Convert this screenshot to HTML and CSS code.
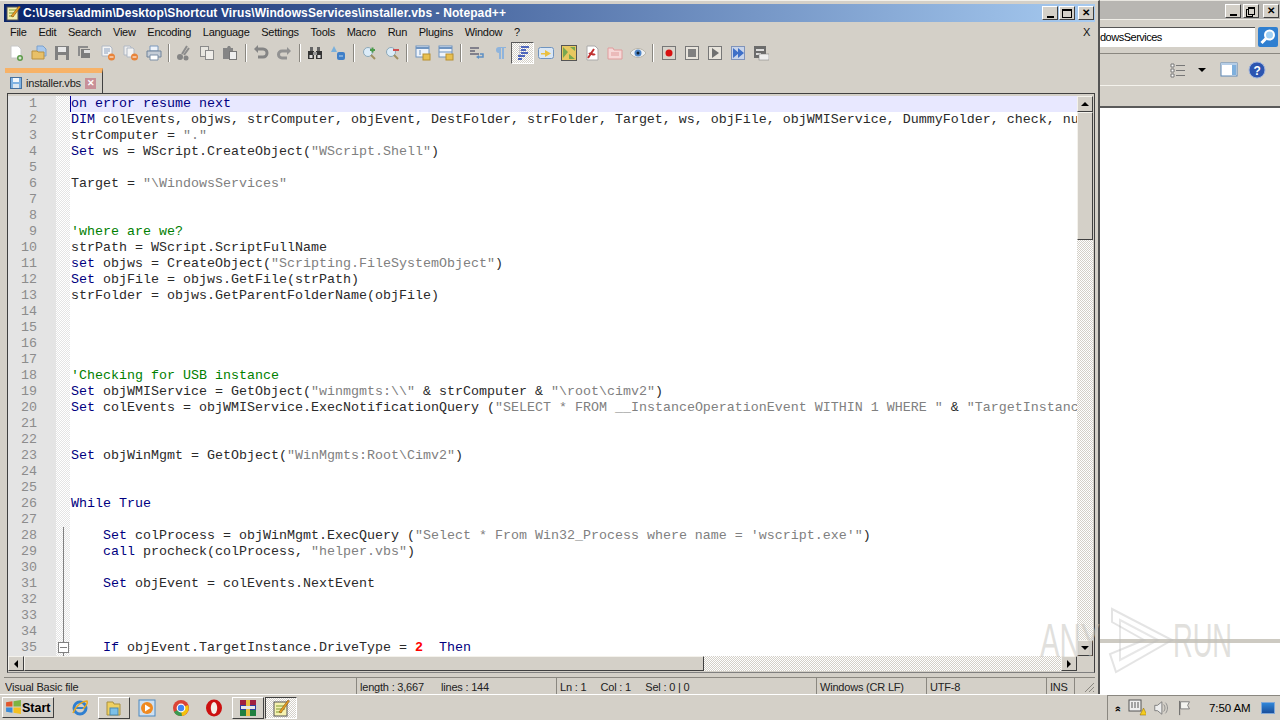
FILE: index.html
```html
<!DOCTYPE html>
<html lang="en">
<head>
    <meta charset="UTF-8">
    <title>installer.vbs - Notepad++</title>
    <link rel="stylesheet" href="styles.css">
</head>
<body>
    <div class="desktop">
        <!-- explorer window behind -->
        <div class="explorer">
            <div class="ex-title">
                <span class="cap-btn"><i class="g-min"></i></span>
                <span class="cap-btn"><i class="g-restore"></i></span>
                <span class="cap-btn cap-close">✕</span>
            </div>
            <div class="ex-address">
                <div class="ex-input">dowsServices</div>
                <div class="ex-search">
                    <svg viewBox="0 0 20 20" width="20" height="20"><rect width="20" height="20" rx="2" fill="#2f7fd0"/><circle cx="11.5" cy="8" r="4.5" fill="#9fd0f5" stroke="#fff" stroke-width="2"/><path d="M8 11.5L3.5 16" stroke="#fff" stroke-width="3"/></svg>
                </div>
            </div>
            <div class="ex-tools">
                <svg viewBox="0 0 16 16" width="16" height="16"><path d="M1 2h3v3H1zM1 7h3v3H1zM1 12h3v3H1z" fill="#fff" stroke="#777"/><path d="M6 3.5h9M6 8.5h9M6 13.5h9" stroke="#777"/></svg>
                <i class="arrow-down ex-drop"></i>
                <svg viewBox="0 0 18 16" width="18" height="16"><rect x="1" y="1" width="16" height="13" fill="#fff" stroke="#5b86b5"/><rect x="12" y="2" width="4" height="11" fill="#7fb0dd"/><rect x="1" y="1" width="16" height="2" fill="#b5cde6"/></svg>
                <svg viewBox="0 0 18 18" width="18" height="18"><circle cx="9" cy="9" r="8" fill="#2c55b0" stroke="#9fb4dc"/><text x="9" y="13.5" class="help-mark">?</text></svg>
            </div>
            <div class="ex-header"></div>
        </div>

        <!-- notepad++ window -->
        <div class="npp">
            <div class="titlebar">
                <svg class="app-icon" viewBox="0 0 16 16" width="16" height="16"><rect x="2" y="2" width="11" height="13" fill="#f4f0b0" stroke="#555"/><path d="M4 5h7M4 8h7M4 11h5" stroke="#7a9a30"/><path d="M6 11L14 1l1.500 1L8 12z" fill="#e8a020" stroke="#704010" stroke-width=".5"/></svg>
                <span class="title-text">C:\Users\admin\Desktop\Shortcut Virus\WindowsServices\installer.vbs - Notepad++</span>
                <div class="title-btns">
                    <span class="cap-btn"><i class="g-min"></i></span>
                    <span class="cap-btn"><i class="g-max"></i></span>
                    <span class="cap-btn cap-close">✕</span>
                </div>
            </div>

            <div class="menubar">
                <span>File</span><span>Edit</span><span>Search</span><span>View</span><span>Encoding</span><span>Language</span><span>Settings</span><span>Tools</span><span>Macro</span><span>Run</span><span>Plugins</span><span>Window</span><span>?</span>
                <span class="menu-x">X</span>
            </div>

            <div class="toolbar">
                <span class="tb"><svg viewBox="0 0 16 16"><path d="M3 1h7l3 3v9H3z" fill="#fff" stroke="#c8c8c8"/><circle cx="12" cy="13" r="3" fill="#5c9a48"/><path d="M10.500 13h3M12 11.500v3" stroke="#fff"/></svg></span>
                <span class="tb"><svg viewBox="0 0 16 16"><path d="M6 1h6l3 3v7H6z" fill="#a9c8ec" stroke="#7aa0cc"/><path d="M1 6h5l1 1h6v7H1z" fill="#e8c068" stroke="#b89040"/></svg></span>
                <span class="tb"><svg viewBox="0 0 16 16"><rect x="1" y="1" width="14" height="14" fill="#808080"/><rect x="4" y="2" width="8" height="5" fill="#e8e8e8"/><rect x="4" y="10" width="8" height="5" fill="#d4d0c8"/></svg></span>
                <span class="tb"><svg viewBox="0 0 16 16"><rect x="1" y="1" width="10" height="10" fill="#8c8c8c"/><rect x="3.500" y="3.500" width="10" height="10" fill="#7c7c7c" stroke="#d4d0c8"/><rect x="7" y="5" width="6" height="3" fill="#e0e0e0"/></svg></span>
                <span class="tb"><svg viewBox="0 0 16 16"><path d="M2 1h8l2 2v8H2z" fill="#f4f4f4" stroke="#b0b8c4"/><path d="M4 4h6M4 6h6M4 8h4" stroke="#8aa0c0"/><circle cx="11.500" cy="12" r="3.500" fill="#e8843a"/><path d="M9.500 12h4" stroke="#fff"/></svg></span>
                <span class="tb"><svg viewBox="0 0 16 16"><path d="M1 1h6l1 1v8H1z" fill="#eee" stroke="#b0b8c4"/><path d="M4 3h6l1 1v8H4z" fill="#f4f4f4" stroke="#b0b8c4"/><circle cx="11.500" cy="12" r="3.500" fill="#e8843a"/><path d="M9.500 12h4" stroke="#fff"/></svg></span>
                <span class="tb"><svg viewBox="0 0 16 16"><path d="M4 1h8v5H4z" fill="#eef3fa" stroke="#7a98bc"/><path d="M1 6h14v6H1z" fill="#c4ccd6" stroke="#6f8299"/><path d="M4 10h8v5H4z" fill="#fff" stroke="#7a8ea6"/></svg></span>
                <i class="tb-sep"></i>
                <span class="tb"><svg viewBox="0 0 16 16"><path d="M11 1L6 9M13 3L8 10" stroke="#8c8c8c" stroke-width="2"/><circle cx="4" cy="12" r="3" fill="#858585"/><circle cx="10" cy="13" r="2.500" fill="#858585"/></svg></span>
                <span class="tb"><svg viewBox="0 0 16 16"><rect x="1.500" y="1.500" width="8" height="10" fill="#e8e6e0" stroke="#8a8a8a"/><rect x="6.500" y="5.500" width="8" height="9" fill="#f0eeea" stroke="#8a8a8a"/></svg></span>
                <span class="tb"><svg viewBox="0 0 16 16"><path d="M1 3h4l1-2h2l1 2h2v11H1z" fill="#858585"/><rect x="7.500" y="6.500" width="7" height="8" fill="#eee" stroke="#777"/></svg></span>
                <i class="tb-sep"></i>
                <span class="tb"><svg viewBox="0 0 16 16"><path d="M4 4h6a3.500 3.500 0 0 1 0 8H5" fill="none" stroke="#858585" stroke-width="3"/><path d="M1 4l4 4V0z" fill="#858585"/></svg></span>
                <span class="tb"><svg viewBox="0 0 16 16"><path d="M12 6H6a3.500 3.500 0 0 0 0 7h5" fill="none" stroke="#929292" stroke-width="3"/><path d="M11 2l4 4-4 4z" fill="#929292"/></svg></span>
                <i class="tb-sep"></i>
                <span class="tb"><svg viewBox="0 0 16 16"><rect x="1" y="6" width="6" height="8" fill="#333"/><rect x="9" y="6" width="6" height="8" fill="#333"/><rect x="3" y="2" width="3" height="4" fill="#666"/><rect x="10" y="2" width="3" height="4" fill="#666"/><rect x="6" y="7" width="4" height="3" fill="#999"/><rect x="2.500" y="10" width="3" height="3" fill="#ddd"/><rect x="10.500" y="10" width="3" height="3" fill="#ddd"/></svg></span>
                <span class="tb"><svg viewBox="0 0 16 16"><path d="M4 1l3 6H1z" fill="#7ab0dc"/><rect x="7" y="7" width="8" height="8" rx="2" fill="#3f7fc8"/><path d="M9 11h4" stroke="#bcd8f0"/></svg></span>
                <i class="tb-sep"></i>
                <span class="tb"><svg viewBox="0 0 16 16"><circle cx="7" cy="7" r="4.500" fill="#dcecf8" stroke="#8ca8b8"/><path d="M10 10l4 4" stroke="#a09060" stroke-width="2"/><path d="M9 5h5M11.500 2.500v5" stroke="#4c9a4c" stroke-width="2"/></svg></span>
                <span class="tb"><svg viewBox="0 0 16 16"><circle cx="7" cy="7" r="4.500" fill="#dcecf8" stroke="#8ca8b8"/><path d="M10 10l4 4" stroke="#a09060" stroke-width="2"/><path d="M9 5h6" stroke="#d05050" stroke-width="2"/></svg></span>
                <i class="tb-sep"></i>
                <span class="tb"><svg viewBox="0 0 16 16"><rect x="1" y="1" width="13" height="11" fill="#eef3fa" stroke="#6f94c0"/><path d="M1 3h13" stroke="#6f94c0" stroke-width="2"/><path d="M5 5v5" stroke="#6f94c0"/><rect x="8" y="9" width="7" height="6" fill="#e8c050" stroke="#b89030"/></svg></span>
                <span class="tb"><svg viewBox="0 0 16 16"><rect x="1" y="1" width="13" height="11" fill="#eef3fa" stroke="#6f94c0"/><path d="M1 3h13" stroke="#6f94c0" stroke-width="2"/><path d="M1 7h13" stroke="#6f94c0"/><rect x="8" y="9" width="7" height="6" fill="#e8c050" stroke="#b89030"/></svg></span>
                <i class="tb-sep"></i>
                <span class="tb"><svg viewBox="0 0 16 16"><path d="M1 3h9M1 6h5M1 9h9" stroke="#667" stroke-width="1.500"/><path d="M11 9h3v3H9" fill="none" stroke="#5c8fc4" stroke-width="1.500"/><path d="M10 10v4l-3-2z" fill="#5c8fc4"/></svg></span>
                <span class="tb"><svg viewBox="0 0 16 16"><path d="M7 2h7v1h-2v11h-2V3H9v11H7V8a3 3 0 0 1 0-6z" fill="#8fb4dc"/></svg></span>
                <span class="tb tb-on"><svg viewBox="0 0 16 16"><path d="M5 1v14" stroke="#8888aa" stroke-dasharray="1 1"/><path d="M6 2h8M6 5h5M6 8h7M3 11h7M3 14h4" stroke="#1c3cb0" stroke-width="1.500"/></svg></span>
                <span class="tb"><svg viewBox="0 0 16 16"><rect x=".5" y="2.500" width="15" height="11" rx="2" fill="#dbe7f4" stroke="#6f94c0"/><path d="M3 8h4V5l6 3.500L7 12V9.500H3z" fill="#eac040"/></svg></span>
                <span class="tb"><svg viewBox="0 0 16 16"><rect x=".5" y=".5" width="15" height="15" fill="#e8c860" stroke="#555"/><path d="M2 2l5 5-5 6zM9 2h5v4zM8 9l6 5H8z" fill="#78a850"/></svg></span>
                <span class="tb"><svg viewBox="0 0 16 16"><path d="M3 1h8l3 3v11H3z" fill="#fff" stroke="#aaa"/><path d="M4 13L10 4M5 9c2-2 4 2 6 0" fill="none" stroke="#c03030" stroke-width="2"/></svg></span>
                <span class="tb"><svg viewBox="0 0 16 16"><path d="M1 3h5l1 2h8v9H1z" fill="#f6d8d8" stroke="#e09c9c"/><path d="M4 8h8M4 10h8" stroke="#e09c9c"/></svg></span>
                <span class="tb"><svg viewBox="0 0 16 16"><path d="M0 8c4-6 12-6 16 0-4 6-12 6-16 0z" fill="#eef0f2" stroke="#b8b4a8"/><circle cx="8" cy="8" r="3.500" fill="#4f86c8"/><circle cx="8" cy="8" r="1.500" fill="#123"/></svg></span>
                <i class="tb-sep"></i>
                <span class="tb"><svg viewBox="0 0 16 16"><rect x="1.500" y="1.500" width="13" height="13" fill="#d8d4cc" stroke="#777"/><circle cx="8" cy="8" r="3.500" fill="#d81010"/></svg></span>
                <span class="tb"><svg viewBox="0 0 16 16"><rect x="1.500" y="1.500" width="13" height="13" fill="#e8e4dc" stroke="#777"/><rect x="4" y="4" width="8" height="8" fill="#808080"/></svg></span>
                <span class="tb"><svg viewBox="0 0 16 16"><rect x="1.500" y="1.500" width="13" height="13" fill="#e8e4dc" stroke="#777"/><path d="M5 3l7 5-7 5z" fill="#707070"/></svg></span>
                <span class="tb"><svg viewBox="0 0 16 16"><rect x="1.500" y="1.500" width="13" height="13" fill="#c8d4ea" stroke="#7f93ba"/><path d="M3 3l6 5-6 5zM8 3l6 5-6 5z" fill="#3d6fc8"/></svg></span>
                <span class="tb"><svg viewBox="0 0 16 16"><rect x="1" y="1" width="12" height="12" fill="#6c6c6c"/><rect x="3" y="4" width="8" height="2" fill="#ddd"/><rect x="3" y="8" width="5" height="2" fill="#ddd"/><rect x="6" y="9" width="10" height="6" fill="#eee" stroke="#777" stroke-width=".5"/></svg></span>
            </div>

            <div class="tabrow">
                <div class="tab">
                    <svg viewBox="0 0 12 12" width="12" height="12"><rect x=".5" y=".5" width="11" height="11" fill="#7fb2e2" stroke="#45709e"/><rect x="3" y="1" width="6" height="4" fill="#f4f8fc"/><rect x="3" y="7" width="6" height="4" fill="#dbe6f0"/></svg>
                    <span class="tab-name">installer.vbs</span>
                    <span class="tab-close">✕</span>
                </div>
            </div>

            <div class="editor">
                <div class="edit-main">
                    <div class="gutter">
                        <div>1</div><div>2</div><div>3</div><div>4</div><div>5</div><div>6</div><div>7</div><div>8</div><div>9</div><div>10</div><div>11</div><div>12</div><div>13</div><div>14</div><div>15</div><div>16</div><div>17</div><div>18</div><div>19</div><div>20</div><div>21</div><div>22</div><div>23</div><div>24</div><div>25</div><div>26</div><div>27</div><div>28</div><div>29</div><div>30</div><div>31</div><div>32</div><div>33</div><div>34</div><div>35</div>
                    </div>
                    <div class="foldmargin">
                        <i class="fold-line"></i>
                        <i class="fold-box"></i>
                    </div>
                    <div class="code">
                        <div class="ln current"><b>on error resume next</b></div>
                        <div class="ln"><b>DIM</b> colEvents, objws, strComputer, objEvent, DestFolder, strFolder, Target, ws, objFile, objWMIService, DummyFolder, check, nu</div>
                        <div class="ln">strComputer = <s>"."</s></div>
                        <div class="ln"><b>Set</b> ws = WScript.CreateObject(<s>"WScript.Shell"</s>)</div>
                        <div class="ln"></div>
                        <div class="ln">Target = <s>"\WindowsServices"</s></div>
                        <div class="ln"></div>
                        <div class="ln"></div>
                        <div class="ln"><em>'where are we?</em></div>
                        <div class="ln">strPath = WScript.ScriptFullName</div>
                        <div class="ln"><b>set</b> objws = CreateObject(<s>"Scripting.FileSystemObject"</s>)</div>
                        <div class="ln"><b>Set</b> objFile = objws.GetFile(strPath)</div>
                        <div class="ln">strFolder = objws.GetParentFolderName(objFile)</div>
                        <div class="ln"></div>
                        <div class="ln"></div>
                        <div class="ln"></div>
                        <div class="ln"></div>
                        <div class="ln"><em>'Checking for USB instance</em></div>
                        <div class="ln"><b>Set</b> objWMIService = GetObject(<s>"winmgmts:\\"</s> &amp; strComputer &amp; <s>"\root\cimv2"</s>)</div>
                        <div class="ln"><b>Set</b> colEvents = objWMIService.ExecNotificationQuery (<s>"SELECT * FROM __InstanceOperationEvent WITHIN 1 WHERE "</s> &amp; <s>"TargetInstanc</s></div>
                        <div class="ln"></div>
                        <div class="ln"></div>
                        <div class="ln"><b>Set</b> objWinMgmt = GetObject(<s>"WinMgmts:Root\Cimv2"</s>)</div>
                        <div class="ln"></div>
                        <div class="ln"></div>
                        <div class="ln"><b>While True</b></div>
                        <div class="ln"></div>
                        <div class="ln">    <b>Set</b> colProcess = objWinMgmt.ExecQuery (<s>"Select * From Win32_Process where name = 'wscript.exe'"</s>)</div>
                        <div class="ln">    <b>call</b> procheck(colProcess, <s>"helper.vbs"</s>)</div>
                        <div class="ln"></div>
                        <div class="ln">    <b>Set</b> objEvent = colEvents.NextEvent</div>
                        <div class="ln"></div>
                        <div class="ln"></div>
                        <div class="ln"></div>
                        <div class="ln">    <b>If</b> objEvent.TargetInstance.DriveType = <u>2</u>  <b>Then</b></div>
                    </div>
                    <div class="vscroll">
                        <span class="sb-btn"><i class="arrow-up"></i></span>
                        <span class="sb-thumb-v"></span>
                        <span class="sb-track"></span>
                        <span class="sb-btn"><i class="arrow-down"></i></span>
                    </div>
                </div>
                <div class="hscroll">
                    <span class="sb-btn"><i class="arrow-left"></i></span>
                    <span class="sb-thumb-h"></span>
                    <span class="sb-track"></span>
                    <span class="sb-btn"><i class="arrow-right"></i></span>
                    <span class="sb-corner"></span>
                </div>
            </div>

            <div class="statusbar">
                <span class="st st-type">Visual Basic file</span>
                <span class="st st-len">length : 3,667&nbsp;&nbsp;&nbsp;&nbsp;&nbsp;&nbsp;lines : 144</span>
                <span class="st st-pos">Ln : 1&nbsp;&nbsp;&nbsp;&nbsp;&nbsp;Col : 1&nbsp;&nbsp;&nbsp;&nbsp;&nbsp;Sel : 0 | 0</span>
                <span class="st st-eol">Windows (CR LF)</span>
                <span class="st st-enc">UTF-8</span>
                <span class="st st-ins">INS</span>
                <svg class="grip" viewBox="0 0 12 12" width="12" height="12"><path d="M11 2L2 11M11 6L6 11M11 10L10 11" stroke="#8a8780"/></svg>
            </div>
        </div>

        <!-- watermark -->
        <svg class="watermark" viewBox="0 0 200 70" width="200" height="70">
            <text x="0" y="53" textLength="60" lengthAdjust="spacingAndGlyphs" class="wm-text">ANY</text>
            <path d="M72 5L132 36L76 68L70 50L104 36L72 18z" fill="none" stroke="#bbb" stroke-width="2" opacity=".4"/>
            <path d="M80 16L118 36L80 56z" fill="none" stroke="#bbb" stroke-width="2" opacity=".35"/>
            <text x="133" y="53" textLength="59" lengthAdjust="spacingAndGlyphs" class="wm-text">RUN</text>
        </svg>

        <div class="taskbar">
            <div class="start">
                <svg viewBox="0 0 16 16" width="17" height="17"><path d="M1 3l6-1v5H1z" fill="#e0562c"/><path d="M8 2l7-1v6H8z" fill="#7cb342"/><path d="M1 8h6v5l-6-1z" fill="#3a8ad8"/><path d="M8 8h7v6l-7-1z" fill="#f4c020"/></svg>
                <span>Start</span>
            </div>
            <span class="task-item t-ie"><svg viewBox="0 0 18 18" width="18" height="18"><circle cx="9" cy="9" r="6" fill="none" stroke="#2f7fd0" stroke-width="3"/><path d="M5 9h9" stroke="#2f7fd0" stroke-width="2"/><path d="M2 14C5 6 12 2 16 2c1 2-2 6-4 8" fill="none" stroke="#e8a820" stroke-width="1.500"/></svg></span>
            <span class="task-item task-open t-exp"><svg viewBox="0 0 18 18" width="18" height="18"><path d="M2 3h6l1 2h6v11H2z" fill="#f0d060" stroke="#a89040"/><rect x="5" y="9" width="8" height="7" fill="#7cc0e8" stroke="#4a88b0"/></svg></span>
            <span class="task-item t-wmp"><svg viewBox="0 0 18 18" width="18" height="18"><rect x="1" y="1" width="16" height="16" fill="#cfe0f0" stroke="#4a88c0"/><circle cx="9" cy="9" r="6" fill="#f08a20"/><path d="M7 5.500l5.500 3.500L7 12.500z" fill="#fff"/></svg></span>
            <span class="task-item t-chrome"><svg viewBox="0 0 18 18" width="18" height="18"><circle cx="9" cy="9" r="8" fill="#db4437"/><path d="M9 9L2 13a8 8 0 0 0 8 4z" fill="#3a9a50"/><path d="M9 9l1 8a8 8 0 0 0 6-11z" fill="#f4c20d"/><circle cx="9" cy="9" r="3.800" fill="#4285f4" stroke="#fff" stroke-width="1.200"/></svg></span>
            <span class="task-item t-opera"><svg viewBox="0 0 18 18" width="18" height="18"><ellipse cx="9" cy="9" rx="8" ry="8.500" fill="#cc1010"/><ellipse cx="9" cy="9" rx="3.200" ry="6" fill="#f4f0e8"/></svg></span>
            <span class="task-item task-open t-rar"><svg viewBox="0 0 18 18" width="18" height="18"><rect x="1" y="1" width="16" height="5" fill="#a02040"/><rect x="1" y="6" width="16" height="5" fill="#3040a0"/><rect x="1" y="11" width="16" height="6" fill="#208040"/><rect x="7" y="1" width="4" height="16" fill="#e8c040"/><rect x="2" y="7" width="14" height="3" fill="#e8e8e8"/></svg></span>
            <span class="task-item task-active t-npp"><svg viewBox="0 0 18 18" width="18" height="18"><rect x="2" y="3" width="13" height="14" fill="#f6f2b0" stroke="#555"/><path d="M4 7h9M4 10h9M4 13h6" stroke="#7a9a30"/><path d="M7 13L16 1l1.500 1L9 14z" fill="#e8a020" stroke="#704010" stroke-width=".5"/></svg></span>
            <div class="tray">
                <span class="tray-up">»</span>
                <svg class="tray-net" viewBox="0 0 18 18" width="18" height="18"><rect x="1" y="1" width="12" height="11" fill="#eee" stroke="#555"/><path d="M4 3v6M7 3v6M10 3v6" stroke="#555"/><path d="M12 16l3.500-7 3.500 7z" fill="#f4cc20" stroke="#886600" stroke-width=".5"/></svg>
                <svg class="tray-vol" viewBox="0 0 18 18" width="16" height="16"><path d="M2 6h3l5-4v14l-5-4H2z" fill="#eee" stroke="#777"/><path d="M12 5c2 2 2 6 0 8M14 3c3 3 3 9 0 12" fill="none" stroke="#888"/></svg>
                <svg class="tray-flag" viewBox="0 0 18 18" width="16" height="18"><path d="M3 1v16" stroke="#555"/><path d="M4 2h10l-2 4 2 4H4z" fill="#f4f4f0" stroke="#777"/></svg>
                <span class="clock">7:50 AM</span>
                <span class="show-desk"></span>
            </div>
        </div>
    </div>
</body>
</html>
```

FILE: styles.css
```css
* {
    box-sizing: border-box;
}
html, body {
    margin: 0;
    padding: 0;
    height: 100%;
    overflow: hidden;
}
body {
    font-family: "Liberation Sans", Arial, sans-serif;
    font-size: 11px;
    letter-spacing: -0.2px;
    color: #000;
    background: #fff;
}
.desktop {
    position: relative;
    width: 1280px;
    height: 720px;
    overflow: hidden;
    background: #fff;
}

/* window behind */
.explorer {
    position: absolute;
    left: 1090px;
    top: 0;
    width: 190px;
    height: 694px;
    background: #fff;
    display: flex;
    flex-direction: column;
}
.ex-title {
    height: 19px;
    padding: 3px 1px 0 0;
    background: #b8b6b2;
    border-top: 1px solid #e8e6e0;
    display: flex;
    justify-content: flex-end;
    gap: 2px;
}
.ex-address {
    height: 35px;
    padding: 7px 2px 0 10px;
    background: #d4d0c8;
    border-top: 1px solid #f0eee8;
    border-bottom: 1px solid #8a8780;
    display: flex;
    gap: 3px;
}
.ex-input {
    flex: 1;
    height: 20px;
    padding-top: 3px;
    background: #fff;
    border-top: 1px solid #555;
    letter-spacing: -0.5px;
}
.ex-search {
    width: 20px;
    height: 20px;
}
.ex-tools {
    height: 31px;
    background: #d4d0c8;
    display: flex;
    align-items: center;
    padding-left: 80px;
}
.ex-tools svg:first-child {
    margin-right: 12px;
}
.ex-drop {
    margin-right: 14px;
}
.ex-tools svg:last-child {
    margin-left: 10px;
}
.help-mark {
    font: bold 12px "Liberation Sans", sans-serif;
    fill: #fff;
    text-anchor: middle;
}
.ex-header {
    height: 23px;
    background: #d4d0c8;
    border-top: 1px solid #f4f2ec;
    border-bottom: 2px solid #5a5a5a;
}

/* notepad++ */
.npp {
    position: absolute;
    left: 0;
    top: 0;
    width: 1100px;
    height: 694px;
    padding: 4px 3px 0 4px;
    background: #d4d0c8;
    border-top: 1px solid #f2f0ea;
    border-right: 2px solid #555;
    display: flex;
    flex-direction: column;
}
.titlebar {
    height: 18px;
    margin-top: -1px;
    flex: none;
    padding: 0 1px;
    background: linear-gradient(to right, #0a246a, #a6caf0);
    display: flex;
    align-items: center;
}
.app-icon {
    margin-right: 2px;
}
.title-text {
    color: #fff;
    font-weight: bold;
    font-size: 12px;
    letter-spacing: 0.1px;
    white-space: nowrap;
}
.title-btns {
    margin-left: auto;
    display: flex;
    gap: 1px;
}
.cap-btn {
    width: 16px;
    height: 14px;
    background: #d4d0c8;
    border: 1px solid;
    border-color: #fff #404040 #404040 #fff;
    display: flex;
    align-items: center;
    justify-content: center;
    font-size: 10px;
    font-weight: bold;
    line-height: 1;
}
.cap-close {
    margin-left: 2px;
}
.g-min {
    width: 7px;
    height: 2px;
    margin-top: 7px;
    background: #000;
}
.g-max {
    width: 10px;
    height: 9px;
    border: 1px solid #000;
    border-top-width: 2px;
}
.g-restore {
    width: 7px;
    height: 8px;
    border: 1px solid #000;
    border-top-width: 2px;
    box-shadow: -2px 2px 0 -1px #d4d0c8, -2px 2px 0 0 #000;
}
.menubar {
    height: 20px;
    flex: none;
    padding-left: 6px;
    display: flex;
    align-items: center;
    gap: 11.8px;
    letter-spacing: -0.28px;
    color: #111;
}
.menu-x {
    margin-left: auto;
    margin-right: 5px;
}
.toolbar {
    height: 22px;
    flex: none;
    display: flex;
    align-items: center;
}
.tb {
    width: 23px;
    height: 22px;
    flex: none;
    display: flex;
    align-items: center;
    justify-content: center;
}
.tb svg {
    width: 16px;
    height: 16px;
}
.tb-on {
    background: repeating-conic-gradient(#d4d0c8 0 25%, #fff 0 50%) 0 0 / 2px 2px;
    border: 1px solid;
    border-color: #5a5a5a #fff #fff #5a5a5a;
}
.tb-sep {
    width: 2px;
    height: 18px;
    margin: 0 2.95px;
    flex: none;
    border-left: 1px solid #8a8780;
    border-right: 1px solid #fff;
}
.tabrow {
    height: 29px;
    flex: none;
    padding: 4px 0 0 1px;
}
.tab {
    width: 98px;
    height: 25px;
    padding: 0 6px 0 5px;
    background: #d4d0c8;
    border-top: 5px solid #f7b267;
    border-right: 1px solid #404040;
    display: flex;
    align-items: center;
    gap: 4px;
}
.tab-name {
    color: #222;
}
.tab-close {
    width: 11px;
    height: 11px;
    margin-left: auto;
    background: #c89098;
    color: #fff;
    font-size: 9px;
    font-weight: bold;
    line-height: 11px;
    text-align: center;
}
.editor {
    height: 580px;
    flex: none;
    margin-left: 3px;
    background: #d4d0c8;
    border: 1px solid #404040;
    border-bottom-color: #808080;
    display: flex;
    flex-direction: column;
}
.edit-main {
    height: 562px;
    flex: none;
    padding-top: 2px;
    display: flex;
    overflow: hidden;
}
.gutter {
    width: 48px;
    flex: none;
    padding-right: 19px;
    background: #e4e4e4;
    color: #8c8c8c;
    font: 13.33px/16px "Liberation Mono", "Courier New", monospace;
    letter-spacing: 0;
    text-align: right;
}
.foldmargin {
    position: relative;
    width: 14px;
    flex: none;
    background: repeating-conic-gradient(#e4e4e4 0 25%, #fff 0 50%) 0 0 / 2px 2px;
}
.fold-line {
    position: absolute;
    left: 7px;
    top: 431px;
    bottom: 0;
    width: 1px;
    background: #808080;
}
.fold-box {
    position: absolute;
    left: 2px;
    top: 546px;
    width: 11px;
    height: 11px;
    background: #fff;
    border: 1px solid #808080;
}
.fold-box::after {
    content: "";
    position: absolute;
    left: 1px;
    top: 4px;
    width: 7px;
    height: 1px;
    background: #808080;
}
.code {
    flex: 1;
    min-width: 0;
    background: #fff;
    font: 13.33px/16px "Liberation Mono", "Courier New", monospace;
    letter-spacing: 0;
    color: #2a2a2a;
    overflow: hidden;
}
.ln {
    height: 16px;
    padding-left: 1px;
    white-space: pre;
}
.ln.current {
    background: #e8e8ff;
    box-shadow: inset 1px 0 #0000a0;
}
.ln b {
    font-weight: normal;
    color: #000080;
}
.ln s {
    text-decoration: none;
    color: #808080;
}
.ln em {
    font-style: normal;
    color: #008000;
}
.ln u {
    text-decoration: none;
    font-weight: bold;
    color: #ff0000;
}
.vscroll {
    width: 16px;
    margin-right: 1px;
    flex: none;
    display: flex;
    flex-direction: column;
}
.sb-btn {
    width: 16px;
    height: 16px;
    flex: none;
    background: #d4d0c8;
    border: 1px solid;
    border-color: #f4f2ec #404040 #404040 #f4f2ec;
    display: flex;
    align-items: center;
    justify-content: center;
}
.sb-thumb-v {
    height: 128px;
    flex: none;
    background: #d4d0c8;
    border: 1px solid;
    border-color: #f4f2ec #404040 #404040 #f4f2ec;
}
.sb-track {
    flex: 1;
    background: repeating-conic-gradient(#d4d0c8 0 25%, #fff 0 50%) 0 0 / 2px 2px;
}
.hscroll {
    height: 15px;
    flex: none;
    display: flex;
}
.hscroll .sb-btn {
    height: 15px;
}
.sb-thumb-h {
    width: 680px;
    flex: none;
    background: #d4d0c8;
    border: 1px solid;
    border-color: #f4f2ec #404040 #404040 #f4f2ec;
}
.sb-corner {
    width: 17px;
    flex: none;
}
.arrow-up, .arrow-down, .arrow-left, .arrow-right {
    width: 0;
    height: 0;
    display: block;
    border-style: solid;
    border-color: transparent;
}
.arrow-up {
    border-width: 0 4px 4px;
    border-bottom-color: #000;
}
.arrow-down {
    border-width: 4px 4px 0;
    border-top-color: #000;
}
.arrow-left {
    border-width: 4px 4px 4px 0;
    border-right-color: #000;
}
.arrow-right {
    border-width: 4px 0 4px 4px;
    border-left-color: #000;
}
.statusbar {
    height: 17px;
    flex: none;
    margin-top: 4px;
    padding-left: 1px;
    display: flex;
    color: #222;
    border-top: 1px solid #8a8780;
    position: relative;
}
.st {
    height: 16px;
    line-height: 18px;
    padding-left: 3px;
    flex: none;
    white-space: nowrap;
    overflow: hidden;
    border-left: 1px solid #8a8780;
}
.st-type {
    width: 351px;
    border-left: 0;
    padding-left: 0;
}
.st-len {
    width: 200px;
}
.st-pos {
    width: 260px;
}
.st-eol {
    width: 110px;
}
.st-enc {
    width: 120px;
}
.st-ins {
    width: 29px;
    border-right: 1px solid #8a8780;
}
.grip {
    position: absolute;
    right: 0;
    bottom: 1px;
}
.watermark {
    position: absolute;
    left: 1040px;
    top: 604px;
    pointer-events: none;
}
.wm-text {
    font: 49px "Liberation Sans", sans-serif;
    fill: #c4c2bc;
    fill-opacity: .5;
}

/* line running behind the watermark */
.explorer::after {
    content: "";
    position: absolute;
    left: 10px;
    right: 0;
    top: 639px;
    height: 4px;
    background: #cdcac2;
}

/* taskbar */
.taskbar {
    position: absolute;
    left: 0;
    right: 0;
    bottom: 0;
    height: 26px;
    padding-left: 2px;
    background: #d4d0c8;
    border-top: 1px solid #fff;
    display: flex;
    align-items: center;
}
.start {
    width: 52px;
    height: 21px;
    flex: none;
    padding-left: 2px;
    margin-right: 10px;
    font-weight: bold;
    font-size: 12.5px;
    letter-spacing: 0;
    background: #d4d0c8;
    border: 1px solid;
    border-color: #fff #404040 #404040 #fff;
    display: flex;
    align-items: center;
    gap: 0;
}
.task-item {
    width: 32px;
    height: 22px;
    flex: none;
    margin-right: 1.5px;
    display: flex;
    align-items: center;
    justify-content: center;
    border: 1px solid transparent;
}
.task-open {
    border-color: #fff #404040 #404040 #fff;
}
.task-active {
    border-color: #404040 #fff #fff #404040;
    background: repeating-conic-gradient(#d4d0c8 0 25%, #fff 0 50%) 0 0 / 2px 2px;
}
.tray {
    margin-left: auto;
    width: 173px;
    height: 25px;
    padding-left: 5px;
    flex: none;
    border-left: 1px solid #8a8780;
    border-top: 1px solid #8a8780;
    display: flex;
    align-items: center;
}
.tray-up {
    width: 8px;
    font-size: 11px;
    font-weight: bold;
    transform: rotate(-90deg);
}
.tray-net {
    margin-left: 7px;
}
.tray-vol {
    margin-left: 7px;
}
.tray-flag {
    margin-left: 8px;
}
.clock {
    margin-left: 16px;
    font-size: 11.5px;
    letter-spacing: -0.1px;
}
.show-desk {
    width: 14px;
    height: 12px;
    margin-left: 10px;
    background: linear-gradient(#2f86d8, #1a4f9c);
    border: 1px solid #80a8d8;
}
```
